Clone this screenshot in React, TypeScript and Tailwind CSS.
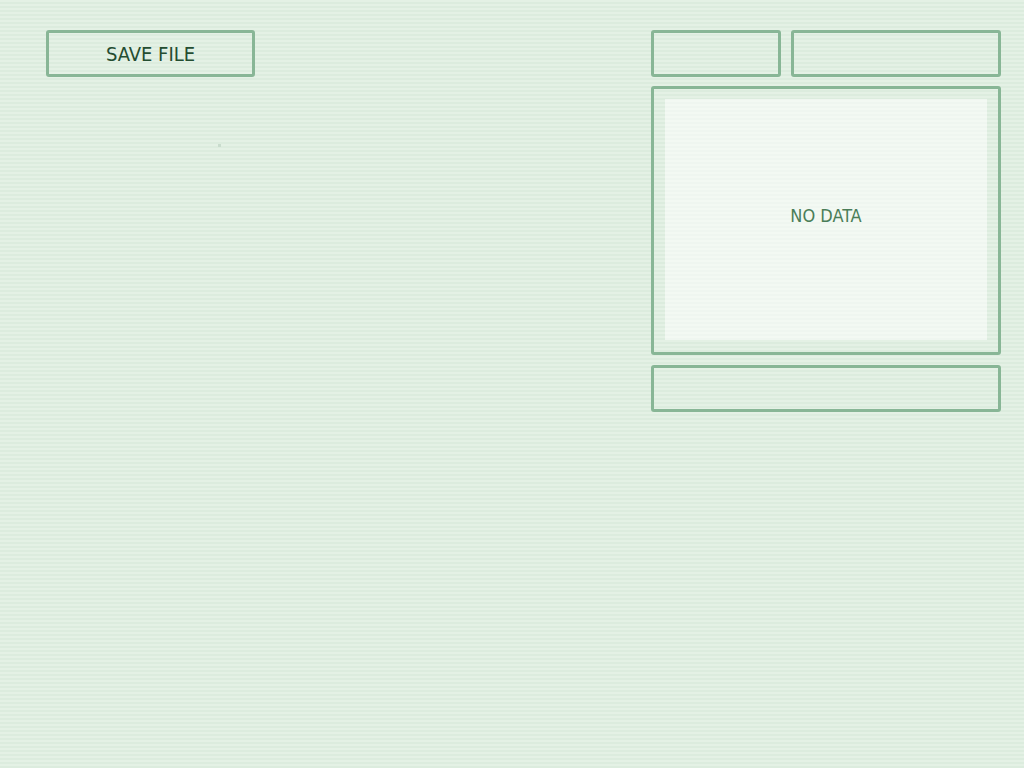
import React from "react";

export default function App() {
  const font = { fontFamily: '"DejaVu Sans Condensed", "DejaVu Sans", sans-serif' };
  return (
    <div
      className="w-[1024px] h-[768px] bg-[repeating-linear-gradient(180deg,#e4f1e5_0px,#e4f1e5_2px,#dcecde_2px,#dcecde_4px)] flex pt-[30px] pl-[46px] pr-[23px]"
      style={font}
    >
      <div className="flex flex-col">
        <button className="w-[209px] h-[47px] border-[3px] border-[#88b696] rounded-[3px] text-[20px] text-[#244d31] flex items-center justify-center pt-[1px]">
          SAVE FILE
        </button>
        <div className="ml-[172px] mt-[67px] w-[3px] h-[3px] bg-[#c9dccd]" />
      </div>
      <div className="ml-auto w-[350px] flex flex-col gap-[9px]">
        <div className="flex gap-[10px]">
          <div className="w-[130px] h-[47px] border-[3px] border-[#88b696] rounded-[3px]" />
          <div className="flex-1 h-[47px] border-[3px] border-[#88b696] rounded-[3px]" />
        </div>
        <div className="h-[269px] border-[3px] border-[#88b696] rounded-[3px] pt-[10px] px-[11px] pb-[12px]">
          <div className="h-full bg-white/55 flex items-center justify-center text-[18px] text-[#4a7d58] pb-[9px]">
            NO DATA
          </div>
        </div>
        <div className="mt-[1px] h-[47px] border-[3px] border-[#88b696] rounded-[3px]" />
      </div>
    </div>
  );
}
